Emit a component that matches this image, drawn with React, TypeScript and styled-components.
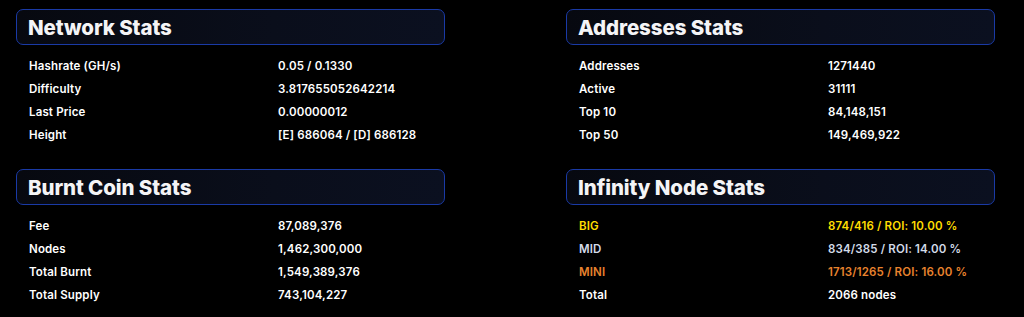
import React from 'react';
import styled, { createGlobalStyle } from 'styled-components';

const GlobalStyle = createGlobalStyle`
  html, body {
    margin: 0;
    padding: 0;
    background: #000;
  }
  body {
    font-family: Inter, "Noto Sans", sans-serif;
    color: #fff;
  }
`;

const Page = styled.div`
  display: grid;
  grid-template-columns: 429px 429px;
  column-gap: 121px;
  row-gap: 12px;
  padding: 9px 0 0 16px;
  background: #000;
  min-height: 308px;
`;

const Section = styled.section`
  display: flex;
  flex-direction: column;
`;

const Header = styled.div`
  height: 36px;
  box-sizing: border-box;
  display: flex;
  align-items: center;
  padding: 0 11px;
  border: 1.5px solid #1a3aa6;
  border-radius: 7px;
  background: linear-gradient(90deg, #070910 0%, #0a0e1b 60%, #0b1020 100%);
`;

const Title = styled.h2`
  margin: 0;
  font-size: 20.5px;
  font-weight: 800;
  letter-spacing: -0.1px;
  color: #f4f4f6;
`;

const Rows = styled.div`
  display: flex;
  flex-direction: column;
  padding: 9px 0 0 13px;
`;

const Row = styled.div<{ tone?: string }>`
  display: grid;
  grid-template-columns: 249px 1fr;
  height: 23px;
  align-items: center;
  font-size: 11.5px;
  font-weight: 600;
  letter-spacing: 0.15px;
  color: ${({ tone }) => tone || '#ffffff'};
`;

type Stat = { label: string; value: string; tone?: string };

const sections: { title: string; stats: Stat[] }[] = [
  {
    title: 'Network Stats',
    stats: [
      { label: 'Hashrate (GH/s)', value: '0.05 / 0.1330' },
      { label: 'Difficulty', value: '3.817655052642214' },
      { label: 'Last Price', value: '0.00000012' },
      { label: 'Height', value: '[E] 686064 / [D] 686128' },
    ],
  },
  {
    title: 'Addresses Stats',
    stats: [
      { label: 'Addresses', value: '1271440' },
      { label: 'Active', value: '31111' },
      { label: 'Top 10', value: '84,148,151' },
      { label: 'Top 50', value: '149,469,922' },
    ],
  },
  {
    title: 'Burnt Coin Stats',
    stats: [
      { label: 'Fee', value: '87,089,376' },
      { label: 'Nodes', value: '1,462,300,000' },
      { label: 'Total Burnt', value: '1,549,389,376' },
      { label: 'Total Supply', value: '743,104,227' },
    ],
  },
  {
    title: 'Infinity Node Stats',
    stats: [
      { label: 'BIG', value: '874/416 / ROI: 10.00 %', tone: '#ffdd00' },
      { label: 'MID', value: '834/385 / ROI: 14.00 %', tone: '#d3dbe8' },
      { label: 'MINI', value: '1713/1265 / ROI: 16.00 %', tone: '#e8832e' },
      { label: 'Total', value: '2066 nodes' },
    ],
  },
];

const App: React.FC = () => {
  return (
    <>
      <GlobalStyle />
      <Page>
        {sections.map((section) => (
          <Section key={section.title}>
            <Header>
              <Title>{section.title}</Title>
            </Header>
            <Rows>
              {section.stats.map((stat) => (
                <Row key={stat.label} tone={stat.tone}>
                  <span>{stat.label}</span>
                  <span>{stat.value}</span>
                </Row>
              ))}
            </Rows>
          </Section>
        ))}
      </Page>
    </>
  );
};

export default App;
